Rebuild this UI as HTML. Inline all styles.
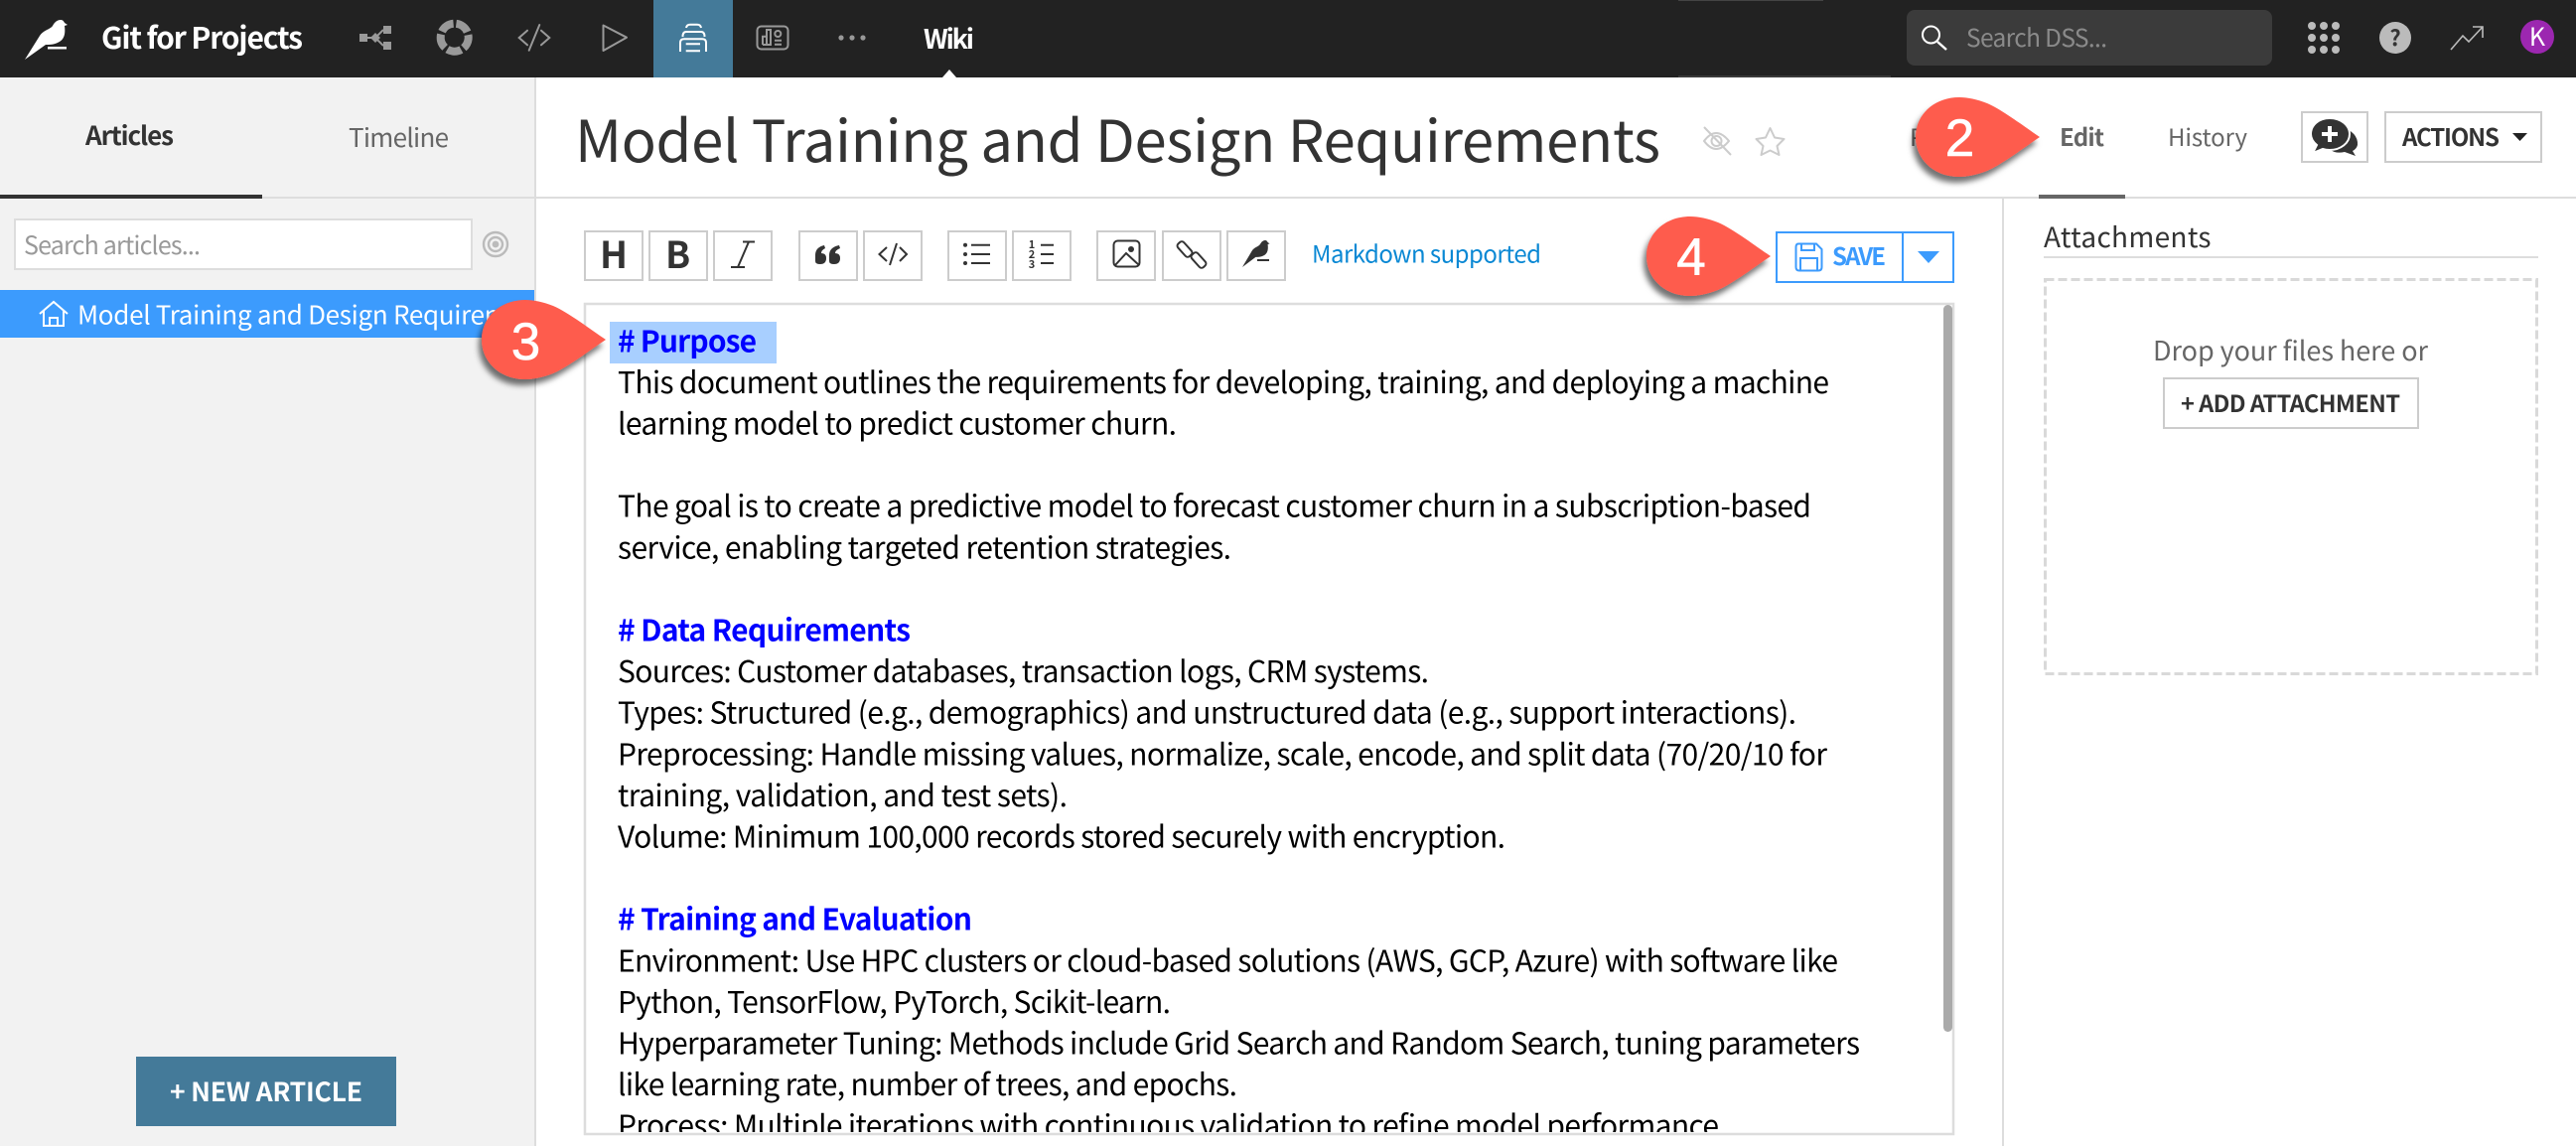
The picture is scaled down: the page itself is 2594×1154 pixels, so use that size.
<!DOCTYPE html>
<html><head><meta charset="utf-8"><title>Wiki</title>
<style>
html,body{margin:0;padding:0;background:#fff;width:2594px;height:1154px;overflow:hidden}
svg{display:block}
text{font-family:"Noto Sans CJK JP","Liberation Sans",sans-serif;white-space:pre}
.b{font-weight:700}
.l{fill:#000;font-size:30px}
.h{fill:#00f;font-size:30px;font-weight:700}
.i{fill:none;stroke:#999;stroke-width:2}
.k{fill:none;stroke:#333;stroke-width:2}
.btn{fill:#fff;stroke:#ccc;stroke-width:2}
.d{font-family:"Liberation Sans",sans-serif;font-size:53px;fill:#fff;stroke:#fff;stroke-width:.6px}
</style></head><body>
<svg width="2594" height="1154" viewBox="0 0 2594 1154" xmlns="http://www.w3.org/2000/svg">
<defs>
<filter id="s" x="-20%" y="-20%" width="140%" height="150%"><feDropShadow dx="-3" dy="6" stdDeviation="3" flood-color="#000" flood-opacity=".55"/></filter>
<clipPath id="ca"><rect x="590" y="307" width="1376" height="833"/></clipPath>
<clipPath id="cb"><rect x="0" y="292" width="538" height="48"/></clipPath>
<path id="tear" d="M125 40C110 30 88 13 72 6C62 2 52 0 44 0C18 0 0 18 0 40C0 62 18 80 44 80C52 80 62 78 72 74C88 67 110 50 125 40Z"/>
<path id="bird" d="M25 60L40 36C44 30 50 30 53 26C55 22 58 20 61 20C63 20 64 21 65 23L68 25L65 26C66 34 65 40 58 43C54 45 50 45 46 45Z"/>
</defs>

<!-- top bar -->
<rect width="2594" height="78" fill="#222"/>
<rect x="1690" y="76" width="214" height="2" fill="#3a3a3a"/>
<rect x="1690" y="0" width="146" height="1" fill="#444"/>
<use href="#bird" fill="#fff"/>
<rect x="48" y="47" width="19" height="2.5" fill="#fff"/>
<text x="102" y="49" class="b" font-size="30" fill="#fff" textLength="203">Git for Projects</text>

<g fill="#999"><rect x="362" y="34" width="8" height="8"/><rect x="386" y="26" width="8" height="8"/><rect x="386" y="42" width="8" height="8"/><path d="M378 33l5 5-5 5-5-5z"/></g>
<path class="i" d="M370 38H378L386 30M378 38L386 46"/>
<circle cx="457.7" cy="37.7" r="14" fill="none" stroke="#999" stroke-width="8" stroke-dasharray="14.6 3" transform="rotate(-83 457.7 37.7)"/>
<path class="i" d="M531 30.7L522.7 38L531 45.3M545 30.7L553.3 38L545 45.3M543.3 25L532.7 50.7" stroke-linecap="round"/>
<path class="i" d="M607.5 25.5L631 37.7L607.5 51Z" stroke-linejoin="round"/>
<rect x="658" width="80" height="78" fill="#447a99"/>
<path fill="none" stroke="#fff" stroke-width="2" d="M685 52V43Q685 39.3 689 39.3H707Q711 39.3 711 43V52M687.5 37Q687.5 32 691 32H706Q709.5 32 709.5 37M691 28Q691.5 24.7 695 24.7H702Q705.5 24.7 706 28M690.7 44.3H705M690.7 51.3H705"/>
<rect x="762.5" y="26.5" width="31" height="23" rx="4" class="i"/>
<path class="i" d="M768 45V36.7H772M772 45V30H776V45H768M780 40.7H787M780 44.7H787"/>
<circle cx="783.3" cy="34" r="3" class="i"/>
<g fill="#999"><circle cx="847" cy="38" r="2.6"/><circle cx="858" cy="38" r="2.6"/><circle cx="869" cy="38" r="2.6"/></g>
<text x="930" y="49" class="b" font-size="27" fill="#fff" textLength="51">Wiki</text>
<path d="M956 70L949 78H963Z" fill="#fff"/>

<rect x="1920" y="10" width="368" height="56" rx="8" fill="#3b3b3b"/>
<circle cx="1944.5" cy="35" r="8.5" fill="none" stroke="#fff" stroke-width="2"/>
<path d="M1951 42L1960 50" stroke="#fff" stroke-width="2.4" fill="none"/>
<text x="1980" y="47" font-size="24.5" fill="#8a8a8a" textLength="142">Search DSS...</text>
<g fill="#bbb"><circle cx="2328" cy="26" r="4"/><circle cx="2340" cy="26" r="4"/><circle cx="2352" cy="26" r="4"/><circle cx="2328" cy="38" r="4"/><circle cx="2340" cy="38" r="4"/><circle cx="2352" cy="38" r="4"/><circle cx="2328" cy="50" r="4"/><circle cx="2340" cy="50" r="4"/><circle cx="2352" cy="50" r="4"/></g>
<circle cx="2412" cy="38" r="16" fill="#bbb"/>
<text x="2412" y="46" font-size="22" class="b" fill="#333" text-anchor="middle">?</text>
<path d="M2468 50L2480 36L2486 42L2500 27M2490 27H2500V38" fill="none" stroke="#bbb" stroke-width="1.6"/>
<circle cx="2555" cy="37" r="17" fill="#9c27b0"/>
<text x="2555" y="46" font-size="25" fill="#fff" text-anchor="middle">K</text>

<!-- sidebar -->
<rect x="0" y="78" width="538" height="1076" fill="#f2f2f2"/>
<rect x="538" y="78" width="2" height="1076" fill="#ddd"/>
<rect x="0" y="198" width="2594" height="2" fill="#ddd"/>
<rect x="0" y="196" width="264" height="4" fill="#333"/>
<text x="86" y="146" class="b" font-size="26" fill="#333" textLength="89">Articles</text>
<text x="351" y="148" font-size="26" fill="#666" textLength="101">Timeline</text>
<rect x="15" y="221" width="460" height="50" fill="#fff" stroke="#ddd" stroke-width="2"/>
<text x="24" y="256" font-size="25" fill="#999" textLength="178">Search articles...</text>
<g fill="none" stroke="#bbb" stroke-width="2.4"><circle cx="499" cy="246" r="12"/><circle cx="499" cy="246" r="7"/></g><circle cx="499" cy="246" r="3.4" fill="#bbb"/>
<rect x="0" y="292" width="538" height="48" fill="#3c9bfd"/>
<path fill="none" stroke="#fff" stroke-width="2" d="M40 316L54 304L68 316M44 313V328H64V313M50 328V320H58V328"/>
<text x="78" y="326.500" font-size="26" letter-spacing="-.3" fill="#fff" clip-path="url(#cb)">Model Training and Design Requirements</text>
<rect x="137" y="1064" width="262" height="70" fill="#447a99"/>
<text x="171" y="1109" class="b" font-size="26.500" fill="#fff" textLength="194">+ NEW ARTICLE</text>

<!-- header -->
<text x="579" y="163" font-size="58" fill="#333" textLength="1093">Model Training and Design Requirements</text>
<g fill="none" stroke="#ccc" stroke-width="2"><path d="M1716 142Q1728 126 1741 142Q1728 158 1716 142Z"/><circle cx="1728.500" cy="142" r="5"/><path d="M1716 128L1743 156"/></g>
<path d="M1782.500 129L1787 138.500L1796.500 140L1789.500 147L1791.500 156L1782.500 151.500L1773.500 156L1775.500 147L1768.500 140L1778 138.500Z" fill="none" stroke="#ccc" stroke-width="2" stroke-linejoin="round"/>
<text x="1923" y="147" font-size="24" fill="#666">Preview</text>
<text x="2074" y="147" class="b" font-size="24" fill="#666" textLength="45">Edit</text>
<text x="2183" y="147" font-size="24" fill="#666" textLength="80">History</text>
<rect x="2053" y="196" width="87" height="4" fill="#666"/>
<rect x="2318" y="113" width="66" height="50" class="btn"/>
<path d="M2356 127Q2375 133 2374 146Q2373 150 2369 152L2372 157L2361 153Q2352 155 2347 151Z" fill="#333"/>
<path d="M2346 119C2357 119 2366 126 2366 135C2366 144 2357 151 2346 151Q2342 151 2339 150L2329 154L2333 146Q2327 141 2327 135C2327 126 2335 119 2346 119Z" fill="#333" stroke="#fff" stroke-width="2"/>
<path d="M2346 127V143M2338 135H2354" stroke="#fff" stroke-width="4"/>
<rect x="2402" y="113" width="157" height="50" class="btn"/>
<text x="2419" y="147" class="b" font-size="24" fill="#333" textLength="98">ACTIONS</text>
<path d="M2530 134H2545L2537.500 142Z" fill="#222"/>

<!-- toolbar -->
<g>
<rect x="589" y="233" width="58" height="49" class="btn"/><rect x="654" y="233" width="58" height="49" class="btn"/><rect x="719" y="233" width="58" height="49" class="btn"/>
<rect x="805" y="233" width="58" height="49" class="btn"/><rect x="870" y="233" width="58" height="49" class="btn"/>
<rect x="955" y="233" width="58" height="49" class="btn"/><rect x="1020" y="233" width="58" height="49" class="btn"/>
<rect x="1105" y="233" width="58" height="49" class="btn"/><rect x="1171" y="233" width="58" height="49" class="btn"/><rect x="1236" y="233" width="58" height="49" class="btn"/>
</g>
<text x="604" y="270" class="b" font-size="37" fill="#333" textLength="27">H</text>
<text x="670" y="270" class="b" font-size="37" fill="#333" textLength="26">B</text>
<path class="k" d="M748 243.500H760M736 269H750M754 243.500L743 269"/>
<path d="M821 266V257Q821 249 830 247L831 250Q827 252 827 255Q832 255 832 260Q832 266 826 266Q821 266 821 263ZM835 266V257Q835 249 845 247L846 250Q841 252 841 255Q846 255 846 260Q846 266 840 266Q835 266 835 263Z" fill="#333"/>
<path class="k" d="M893 249L885.500 256L893 263M906 249L913 256L906 263M903 245L896 267" stroke-width="1.800"/>
<g fill="#333"><circle cx="972" cy="246.700" r="2"/><circle cx="972" cy="256" r="2"/><circle cx="972" cy="265" r="2"/></g>
<path class="k" d="M978 246.700H997M978 256H997M978 265H997"/>
<text x="1039" y="250" class="b" font-size="11" fill="#333" text-anchor="middle">1</text>
<text x="1039" y="260" class="b" font-size="11" fill="#333" text-anchor="middle">2</text>
<text x="1039" y="270" class="b" font-size="11" fill="#333" text-anchor="middle">3</text>
<path class="k" d="M1048 246.700H1061M1048 256H1061M1048 265H1061"/>
<rect x="1121.500" y="242.500" width="26" height="26" rx="4" class="k" stroke-width="2.200"/>
<circle cx="1139" cy="251" r="3" fill="#333"/>
<path class="k" d="M1123 267L1134 255L1147 267"/>
<rect x="1189" y="242.500" width="8" height="17" rx="3" class="k" transform="rotate(-42 1193 251)"/>
<rect x="1203" y="253.500" width="8" height="17" rx="3" class="k" transform="rotate(-42 1207 262)"/>
<use href="#bird" fill="#333" transform="translate(1251 242) scale(.64 .675) translate(-25 -20)"/>
<rect x="1266" y="261" width="12" height="2" fill="#333"/>
<text x="1321" y="264.500" font-size="24" fill="#0a88d4" textLength="231">Markdown supported</text>

<rect x="1789" y="234" width="178" height="50" fill="#fff" stroke="#3c9bfd" stroke-width="2"/>
<rect x="1915" y="234" width="2" height="50" fill="#3c9bfd"/>
<path fill="none" stroke="#3c9bfd" stroke-width="2" d="M1811 245.500H1829L1834.500 251V269Q1834.500 272.500 1831 272.500H1812Q1808.500 272.500 1808.500 269V249Q1808.500 245.500 1811 245.500ZM1813 272V260H1830V272M1814 246V252H1827V246"/>
<text x="1845" y="267" class="b" font-size="24" fill="#3c9bfd" textLength="54">SAVE</text>
<path d="M1931 253H1953L1942 265Z" fill="#3c9bfd"/>

<!-- editor -->
<rect x="614" y="324" width="168" height="42" fill="#a8cfff"/>
<g clip-path="url(#ca)">
<text x="622" y="354.300" class="h" textLength="140">&#35; Purpose</text>
<text x="622" y="395.900" class="l" textLength="1220">This document outlines the requirements for developing, training, and deploying a machine</text>
<text x="622" y="437.500" class="l" textLength="563">learning model to predict customer churn.</text>
<text x="622" y="520.700" class="l" textLength="1202">The goal is to create a predictive model to forecast customer churn in a subscription-based</text>
<text x="622" y="562.300" class="l" textLength="618">service, enabling targeted retention strategies.</text>
<text x="622" y="645.500" class="h" textLength="295">&#35; Data Requirements</text>
<text x="622" y="687.100" class="l" textLength="817">Sources: Customer databases, transaction logs, CRM systems.</text>
<text x="622" y="728.700" class="l" textLength="1187">Types: Structured (e.g., demographics) and unstructured data (e.g., support interactions).</text>
<text x="622" y="770.300" class="l" textLength="1218">Preprocessing: Handle missing values, normalize, scale, encode, and split data (70/20/10 for</text>
<text x="622" y="811.900" class="l" textLength="453">training, validation, and test sets).</text>
<text x="622" y="853.500" class="l" textLength="894">Volume: Minimum 100,000 records stored securely with encryption.</text>
<text x="622" y="936.700" class="h" textLength="357">&#35; Training and Evaluation</text>
<text x="622" y="978.300" class="l" textLength="1229">Environment: Use HPC clusters or cloud-based solutions (AWS, GCP, Azure) with software like</text>
<text x="622" y="1019.900" class="l" textLength="557">Python, TensorFlow, PyTorch, Scikit-learn.</text>
<text x="622" y="1061.500" class="l" textLength="1251">Hyperparameter Tuning: Methods include Grid Search and Random Search, tuning parameters</text>
<text x="622" y="1103.100" class="l" textLength="624">like learning rate, number of trees, and epochs.</text>
<text x="622" y="1144.700" class="l" textLength="1109">Process: Multiple iterations with continuous validation to refine model performance</text>
</g>
<rect x="589" y="306" width="1378" height="836" fill="none" stroke="#ddd" stroke-width="2.500"/>
<rect x="1957" y="307" width="9" height="732" rx="4.500" fill="#aaa"/>

<!-- right pane -->
<rect x="2016" y="200" width="2" height="954" fill="#ddd"/>
<text x="2058" y="249" font-size="28" fill="#333" textLength="168.500">Attachments</text>
<rect x="2058" y="258" width="498" height="2" fill="#ddd"/>
<rect x="2059.500" y="281.500" width="495" height="397" fill="none" stroke="#d9d9d9" stroke-width="3" stroke-dasharray="9 4"/>
<text x="2168" y="363" font-size="27" fill="#666" textLength="277">Drop your files here or</text>
<rect x="2179" y="381" width="256" height="50" class="btn"/>
<text x="2196" y="415" class="b" font-size="23.500" fill="#333" textLength="221">+ ADD ATTACHMENT</text>

<!-- callouts -->
<use href="#tear" transform="translate(1929,98)" fill="#fe5b4d" filter="url(#s)"/>
<text x="1973.500" y="157" text-anchor="middle" class="d">2</text>
<use href="#tear" transform="translate(485,302)" fill="#fe5b4d" filter="url(#s)"/>
<text x="529.500" y="362" text-anchor="middle" class="d">3</text>
<use href="#tear" transform="translate(1658,218)" fill="#fe5b4d" filter="url(#s)"/>
<text x="1703" y="277" text-anchor="middle" class="d">4</text>
</svg>
</body></html>
